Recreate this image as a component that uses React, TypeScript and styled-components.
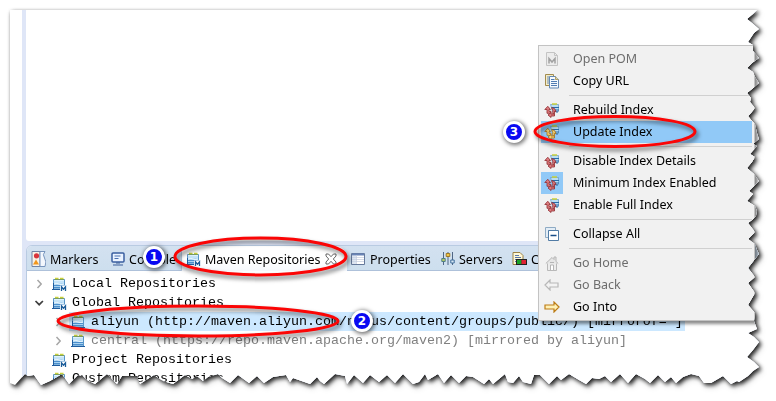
import React from "react";
import styled, { createGlobalStyle } from "styled-components";

const GlobalStyle = createGlobalStyle`
  body { margin: 0; background: #fff; overflow: hidden; }
`;

const rightEdge =
  "757 10,753 14,747 19,752 23,759 29,754 33,748 42,753 45,753 51,759 58,752 63,747 68,753 72,755 77,759 83,752 89,747 93,751 98,750 102,755 108,751 113,748 116,752 121,755 124,757 133,759 139,753 144,757 146,750 154,755 157,752 162,747 168,754 174,759 181,753 187,749 191,753 194,747 201,755 206,757 211,756 216,752 220,748 223,755 232,748 239,755 244,757 250,759 254,755 259,748 268,755 277,748 283,755 293,748 305,755 313,754 321,757 329,748 333,754 337,759 342,753 350,747 357,754 362,759 367,753 371,750 374";
const bottomEdge =
  "748 376,739 382,737 381,731 384,723 376,711 383,704 383,699 376,691 374,683 377,676 383,671 377,665 382,658 375,650 383,645 379,636 374,628 383,620 374,611 382,605 376,599 379,592 378,586 384,579 380,569 374,561 380,557 376,549 384,540 375,534 375,531 384,523 382,519 376,513 383,508 382,505 374,493 384,489 379,484 384,473 377,466 376,459 383,451 375,444 383,438 374,428 380,425 374,419 382,413 384,403 374,395 383,387 375,379 382,370 375,363 383,354 375,347 384,345 376,335 374,324 384,320 381,317 377,310 384,293 378,290 382,286 375,273 377,264 383,257 376,249 383,238 375,230 383,222 378,218 374,208 377,203 381,197 376,192 379,185 375,173 384,163 381,154 375,140 384,137 376,122 376,117 384,107 374,95 384,87 380,83 376,78 375,69 384,62 374,50 381,41 385,34 375,28 376,25 374,15 385,10 383";
const outline = ["10 10", ...rightEdge.split(","), ...bottomEdge.split(",")]
  .map((p) => p.split(" ").map((n) => n + "px").join(" "))
  .join(", ");

const Stage = styled.main`
  position: relative;
  width: 776px;
  height: 401px;
  background: #fff;
  font-family: "Noto Sans", sans-serif;
  color: #000;
`;
const Shadow = styled.div`
  filter: drop-shadow(2px 2px 2px rgba(0, 0, 0, 0.85)) drop-shadow(1px 2px 2px rgba(0, 0, 0, 0.22));
`;
const Paper = styled.div`
  position: relative;
  box-sizing: border-box;
  height: 401px;
  padding: 10px 16px 0 22px;
  background: #fff;
  clip-path: polygon(${outline});
`;
const Workbench = styled.div`
  display: flex;
  flex-direction: column;
  height: 391px;
  padding-left: 4px;
  background: #dfe6f7;
`;
const Editor = styled.div`
  height: 231px;
  margin-bottom: 4px;
  flex: none;
  background: #fff;
  border-bottom-left-radius: 3px;
`;
const View = styled.section`
  flex: 1;
  overflow: hidden;
  box-sizing: border-box;
  background: #fff;
  border: 1px solid #b9cbe2;
  border-radius: 6px 0 0 0;
`;
const TabBar = styled.div`
  display: flex;
  height: 24px;
  background: linear-gradient(#d3e1f0, #cddfee);
  border-bottom: 1px solid #aec1da;
`;
const TabItem = styled.div<{ $w: number; $active?: boolean }>`
  display: flex;
  align-items: center;
  box-sizing: border-box;
  flex: none;
  width: ${(p) => p.$w}px;
  height: ${(p) => (p.$active ? 25 : 24)}px;
  padding: 1px 0 0 4px;
  gap: 4px;
  font-size: 12.5px;
  white-space: nowrap;
  background: ${(p) => (p.$active ? "linear-gradient(#fff 60%, #f5f8fc)" : "none")};
  border-left: ${(p) => (p.$active ? "1px solid #b9cbe2" : "none")};
  border-radius: ${(p) => (p.$active ? "4px 12px 0 0" : "0")};
`;
const Label = styled.span`
  line-height: 16px;
`;
const TabLabel = styled(Label)`
  padding-top: 2px;
`;
const Tree = styled.div`
  display: flex;
  flex-direction: column;
  padding-top: 3px;
`;
const TreeRow = styled.div<{ $child?: boolean; $dim?: boolean }>`
  display: flex;
  align-items: center;
  height: 19px;
  padding-left: ${(p) => (p.$child ? 25 : 6)}px;
  color: ${(p) => (p.$dim ? "#808080" : "#000")};
`;
const Arrow = styled.span`
  display: flex;
  width: 17px;
  flex: none;
`;
const RowBody = styled.span<{ $selected?: boolean }>`
  display: flex;
  align-items: center;
  height: 19px;
  padding: 0 2px;
  gap: 5px;
  background: ${(p) => (p.$selected ? "#cce8ff" : "transparent")};
`;
const Mono = styled.span`
  font: 13.33px/19px "Liberation Mono", monospace;
  white-space: pre;
`;
const Menu = styled.div`
  position: absolute;
  left: 538px;
  top: 45px;
  box-sizing: border-box;
  width: 217px;
  height: 276px;
  padding: 2px;
  background: #f1f1f1;
  border: 1px solid #c3c3c3;
  box-shadow: 3px 3px 3px rgba(0, 0, 0, 0.45);
`;
const MenuItem = styled.div<{ $hot?: boolean; $off?: boolean }>`
  display: flex;
  align-items: center;
  height: 22px;
  font-size: 12.5px;
  color: ${(p) => (p.$off ? "#6d6d6d" : "#000")};
  background: ${(p) => (p.$hot ? "#91c9f7" : "none")};
`;
const IconCell = styled.span<{ $checked?: boolean }>`
  display: flex;
  align-items: center;
  justify-content: center;
  flex: none;
  width: 22px;
  height: 22px;
  margin-right: 10px;
  background: ${(p) => (p.$checked ? "#91c9f7" : "none")};
`;
const Separator = styled.div`
  height: 1px;
  margin: 3px 0 3px 28px;
  background: #d0d0d0;
`;
const Marks = styled.svg`
  position: absolute;
  left: 0;
  top: 0;
  filter: drop-shadow(2px 3px 2px rgba(0, 0, 0, 0.55));
`;
const Badge = styled.div<{ $x: number; $y: number }>`
  position: absolute;
  left: ${(p) => p.$x - 11}px;
  top: ${(p) => p.$y - 11}px;
  box-sizing: border-box;
  width: 22px;
  height: 22px;
  border: 3px solid #fff;
  border-radius: 50%;
  background: #0909f2;
  color: #fff;
  font: bold 12px/16px "DejaVu Sans", sans-serif;
  text-align: center;
  box-shadow: 1px 1px 4px 1px rgba(0, 0, 0, 0.55);
`;

const RepoIcon = ({ m }: { m?: boolean }) => (
  <svg width="15" height="14" viewBox="0 0 15 14">
    <path d="M1.500 2.500h11v9.500h-11z" fill="#a9d3f2" stroke="#5a97c8" />
    <path d="M2 3.500h10M2 5h10" stroke="#dff2fd" />
    <path d="M2 7q3-1 5 0t5 0" fill="none" stroke="#f2fbff" />
    <path d="M2 8.500h10M2 10.500h10" stroke="#4c8fcc" />
    <path d="M0 12.500h14M1.500 6v6" stroke="#1f5c9e" />
    <path d="M3 1.500h3.500M8 1.500h3.500" stroke="#c9d13a" strokeWidth="1.600" />
    <path d="M2.500 2.500h9.500" stroke="#7f9c45" strokeWidth=".7" />
    {m && (
      <>
        <path d="M8 8.500h7V14H8z" fill="#fff" />
        <path d="M9.500 14V9.800l2 2.400 2-2.400V14" fill="none" stroke="#1b5c99" strokeWidth="1.300" />
      </>
    )}
  </svg>
);
const MarkersIcon = () => (
  <svg width="15" height="16" viewBox="0 0 15 16">
    <path d="M1 .5h8v15H1z" fill="#f8f2e6" stroke="#7184a5" />
    <path d="M9 .5h5q-3 3-.5 6.500t.5 8.500H9z" fill="#f3f7fd" stroke="#7895bd" />
    <circle cx="5.500" cy="4.800" r="2.600" fill="#d9343b" />
    <path d="m5 8.500 3 5H2z" fill="#f1961b" />
  </svg>
);
const ConsoleIcon = () => (
  <svg width="14" height="14" viewBox="0 0 14 14">
    <rect x="1" y="1" width="12" height="9" rx="1" fill="#eaf3ff" stroke="#3a5fa0" strokeWidth="1.500" />
    <path d="M3.500 4h6M3.500 6.500h4" stroke="#4a70b0" />
    <path d="M5 11h4M2 13h10" stroke="#3a5e99" strokeWidth="1.200" />
  </svg>
);
const TableIcon = () => (
  <svg width="15" height="14" viewBox="0 0 15 14">
    <path d="M.5 1.500h13v11H.5z" fill="#fff" stroke="#65799b" />
    <path d="M1 2.500h12" stroke="#6984b6" strokeWidth="1.800" />
    <path d="M5.500 3v9M1 5.500h12M1 7.500h12M1 9.500h12" stroke="#c3ccdc" strokeWidth=".7" />
    <path d="M1 4h4v8H1z" fill="#c8d5ea" fillOpacity=".6" />
  </svg>
);
const ServersIcon = () => (
  <svg width="14" height="15" viewBox="0 0 14 15">
    <path d="M2.500 1v13M7 1v13M11.500 1v13" stroke="#4f6685" />
    <path d="M.8 7.500h3.400v3H.8z" fill="#b7cc67" stroke="#4f7e84" />
    <path d="M5.200 2.500h3.600v3H5.200z" fill="#f0c745" stroke="#9d7828" />
    <path d="M9.800 9h3.400v3H9.800z" fill="#d8e8f4" stroke="#416e9c" />
  </svg>
);
const CoverageIcon = () => (
  <svg width="15" height="14" viewBox="0 0 15 14">
    <path d="M1 .5h7l3 3v9H1z" fill="#fff8d6" stroke="#9a8146" />
    <path d="M3 3.500h4M3 5.500h6M3 7.500h1M3 9.500h1" stroke="#5876aa" />
    <path d="M4 7h11v6H4z" fill="#222" />
    <path d="M5 8h4.500v4H5z" fill="#18a428" />
    <path d="M9.500 8H14v4H9.500z" fill="#de2434" />
  </svg>
);
const CloseIcon = () => (
  <svg width="12" height="12" viewBox="0 0 12 12">
    <path d="M1 1h2.500L6 3.700 8.500 1H11v2L8.300 6 11 9v2H8.500L6 8.300 3.500 11H1V9l2.700-3L1 3z" fill="#fff" stroke="#555" strokeWidth=".9" />
  </svg>
);
const IndexIcon = ({ gold }: { gold?: boolean }) => {
  const fill = gold ? "#f6d777" : "#dc7c7e";
  const line = gold ? "#a56d16" : "#8f282e";
  return (
    <svg width="16" height="16" viewBox="0 0 16 16">
      <path d="M6.500 2.500h8v7h-6z" fill="#b9ddf3" stroke="#6fa3c9" strokeWidth=".8" />
      <path d="M8 5.500h7M11 8h4M12 10h2" stroke="#286ba8" />
      <path d="M8 2h5" stroke="#c9d13a" strokeWidth="1.600" />
      <path d="m.8 7.500 3-3.200 2.700 3.200H5v1.800h2v2H3V7.500z" fill={fill} stroke={line} strokeWidth=".8" />
      <path d="m7.500 5.500 3.200 1.200L12 9.800l-1.500-.5v2.500H8.800V8.500z" fill={fill} stroke={line} strokeWidth=".8" />
      <path d="m4 13 3-2.500V12h3.500v2H7v1.500z" fill={fill} stroke={line} strokeWidth=".8" />
    </svg>
  );
};
const PomIcon = () => (
  <svg width="14" height="16" viewBox="0 0 14 16">
    <path d="M1.500 1.500h8l3 3v10h-11z" fill="#ececec" stroke="#c4c4c4" />
    <path d="M9.500 1.500v3h3" fill="none" stroke="#c4c4c4" />
    <path d="M4 12.500V7.500l3 3.500 3-3.500v5" fill="none" stroke="#a0a0a0" strokeWidth="1.500" />
  </svg>
);
const CopyIcon = () => (
  <svg width="16" height="16" viewBox="0 0 16 16">
    <path d="M1.500 1.500h8v11h-8z" fill="#f5edc8" stroke="#a28b4e" />
    <path d="M3 4h2M3 6h2M3 8h2M3 10h2" stroke="#6c8cb5" />
    <path d="M5.500 3.500h6l3 3v8.500h-9z" fill="#f5faff" stroke="#6388b4" />
    <path d="M11.500 3.500v3h3" fill="#e4d59a" stroke="#a28b4e" strokeWidth=".8" />
    <path d="M7 6.500h3.500M7 8.500h6M7 10.500h6M7 12.500h6" stroke="#527db3" />
  </svg>
);
const CollapseIcon = () => (
  <svg width="14" height="14" viewBox="0 0 14 14">
    <path d="M.5 10.500V.5h10v3h-7v7z" fill="#e3edf6" stroke="#8fabc4" />
    <path d="M3.500 3.500h10v10h-10z" fill="#fff" stroke="#517ba5" />
    <path d="M5.500 8.500h6" stroke="#174c87" strokeWidth="1.400" />
  </svg>
);
const HomeIcon = () => (
  <svg width="14" height="15" viewBox="0 0 14 15">
    <path d="M2.500 7v7.500h9V7" fill="#ececec" stroke="#b9b9b9" />
    <path d="M.8 7.500 7 1.500l2 2V1h2v4.500l2.200 2" fill="#e6e6e6" stroke="#b5b5b5" />
    <path d="M5.500 14V9h3v5M5 6.500h4" fill="#fff" stroke="#b5b5b5" />
  </svg>
);
const GoArrow = ({ back }: { back?: boolean }) => (
  <svg width="16" height="12" viewBox="0 0 16 12">
    {back ? (
      <path d="m1 6 5-5v3h8v4H6v3z" fill="#f3f3f3" stroke="#b8b8b8" strokeWidth="1.200" />
    ) : (
      <path d="m15 6-5-5v3H1v4h9v3z" fill="#fff1b5" stroke="#bd7d16" strokeWidth="1.200" />
    )}
  </svg>
);
const Chevron = ({ open }: { open?: boolean }) => (
  <svg width="13" height="12" viewBox="0 0 13 12">
    {open ? (
      <path d="m2.500 4 3.700 3.700L9.900 4" fill="none" stroke="#404040" strokeWidth="1.700" />
    ) : (
      <path d="m4.500 2 3.700 4-3.700 4" fill="none" stroke="#a6a6a6" strokeWidth="1.500" />
    )}
  </svg>
);

type Row = { text: string; child?: boolean; dim?: boolean; selected?: boolean; arrow?: "open" | "closed" };
const rows: Row[] = [
  { text: "Local Repositories", arrow: "closed" },
  { text: "Global Repositories", arrow: "open" },
  { text: "aliyun (http://maven.aliyun.com/nexus/content/groups/public/) [mirrorof=*]", child: true, selected: true, arrow: "closed" },
  { text: "central (https://repo.maven.apache.org/maven2) [mirrored by aliyun]", child: true, dim: true, arrow: "closed" },
  { text: "Project Repositories" },
  { text: "Custom Repositories" },
];

type Entry = { text: string; icon: React.ReactNode; off?: boolean; hot?: boolean; checked?: boolean };
const groups: Entry[][] = [
  [
    { text: "Open POM", icon: <PomIcon />, off: true },
    { text: "Copy URL", icon: <CopyIcon /> },
  ],
  [
    { text: "Rebuild Index", icon: <IndexIcon /> },
    { text: "Update Index", icon: <IndexIcon gold />, hot: true },
  ],
  [
    { text: "Disable Index Details", icon: <IndexIcon /> },
    { text: "Minimum Index Enabled", icon: <IndexIcon />, checked: true },
    { text: "Enable Full Index", icon: <IndexIcon /> },
  ],
  [{ text: "Collapse All", icon: <CollapseIcon /> }],
  [
    { text: "Go Home", icon: <HomeIcon />, off: true },
    { text: "Go Back", icon: <GoArrow back />, off: true },
    { text: "Go Into", icon: <GoArrow /> },
  ],
];

export default function App() {
  return (
    <Stage>
      <GlobalStyle />
      <Shadow>
        <Paper>
          <Workbench>
            <Editor />
            <View>
              <TabBar>
                <TabItem $w={80}><MarkersIcon /><TabLabel>Markers</TabLabel></TabItem>
                <TabItem $w={74}><ConsoleIcon /><TabLabel>Console</TabLabel></TabItem>
                <TabItem $w={166} $active>
                  <RepoIcon m /><TabLabel>Maven Repositories</TabLabel><CloseIcon />
                </TabItem>
                <TabItem $w={90}><TableIcon /><TabLabel>Properties</TabLabel></TabItem>
                <TabItem $w={71}><ServersIcon /><TabLabel>Servers</TabLabel></TabItem>
                <TabItem $w={90}><CoverageIcon /><TabLabel>Coverage</TabLabel></TabItem>
              </TabBar>
              <Tree>
                {rows.map((r) => (
                  <TreeRow key={r.text} $child={r.child} $dim={r.dim}>
                    <Arrow>{r.arrow && <Chevron open={r.arrow === "open"} />}</Arrow>
                    <RowBody $selected={r.selected}>
                      <RepoIcon m={!r.child} />
                      <Mono>{r.text}</Mono>
                    </RowBody>
                  </TreeRow>
                ))}
              </Tree>
            </View>
          </Workbench>
          <Menu>
            {groups.map((g, i) => (
              <React.Fragment key={i}>
                {i > 0 && <Separator />}
                {g.map((e) => (
                  <MenuItem key={e.text} $hot={e.hot} $off={e.off}>
                    <IconCell $checked={e.checked}>{e.icon}</IconCell>
                    <Label>{e.text}</Label>
                  </MenuItem>
                ))}
              </React.Fragment>
            ))}
          </Menu>
        </Paper>
      </Shadow>
      <Marks width="776" height="401" fill="none" stroke="#fb0505" strokeWidth="3">
        <ellipse cx="260.500" cy="256.500" rx="85.500" ry="18.500" />
        <ellipse cx="198" cy="321" rx="140" ry="15" />
        <ellipse cx="615" cy="131.500" rx="80" ry="15" />
      </Marks>
      <Badge $x={154} $y={257}>1</Badge>
      <Badge $x={362} $y={321}>2</Badge>
      <Badge $x={514} $y={132}>3</Badge>
    </Stage>
  );
}
